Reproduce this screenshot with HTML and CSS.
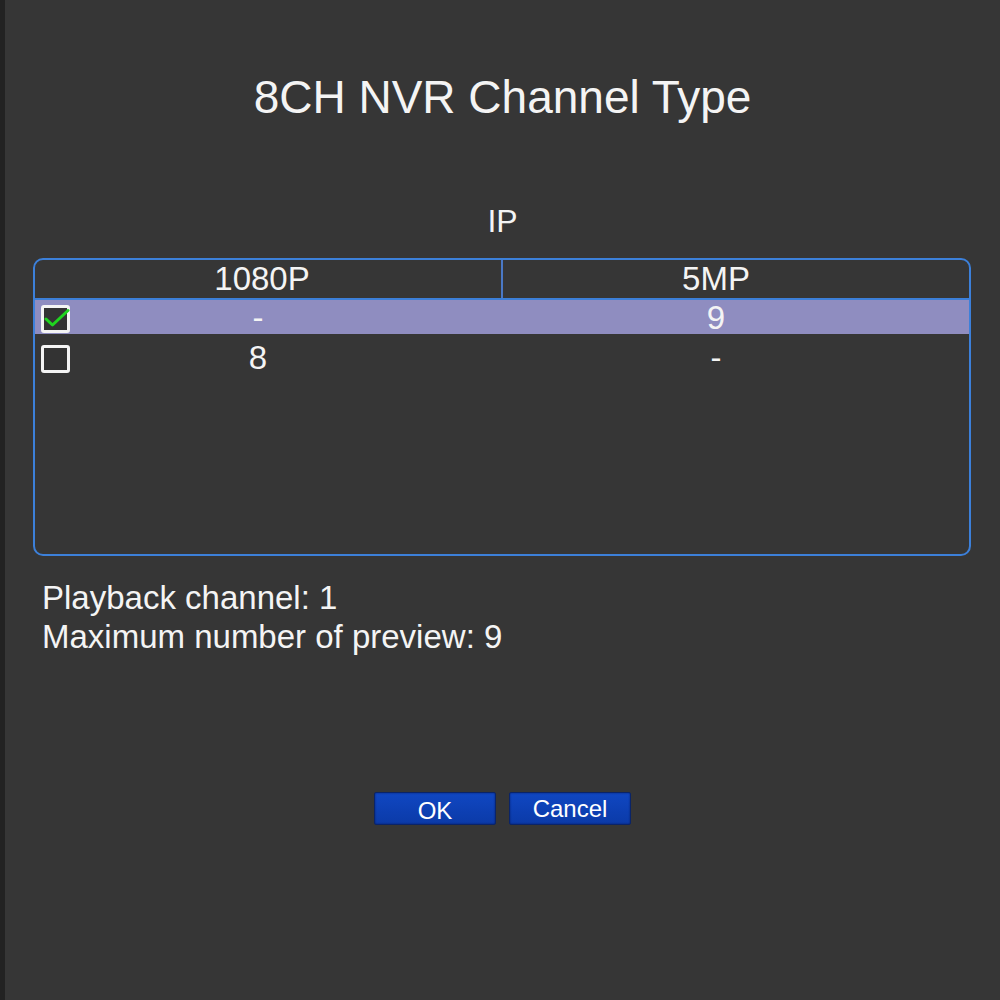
FILE: index.html
```html
<!DOCTYPE html>
<html>
<head>
<meta charset="utf-8">
<link rel="stylesheet" href="styles.css">
</head>
<body>
<div class="screen">
  <h1 class="title">8CH NVR Channel Type</h1>
  <div class="section">IP</div>
  <div class="table">
    <div class="thead">
      <div class="th th1">1080P</div>
      <div class="th th2">5MP</div>
    </div>
    <div class="row selected">
      <div class="cbcell"><span class="check"><svg width="28" height="24" viewBox="0 0 28 24"><path d="M2 11 L8.5 17 L24 2.5" fill="none" stroke="#1fd51f" stroke-width="3" stroke-linecap="round" stroke-linejoin="round"/></svg></span></div>
      <div class="td td1">-</div>
      <div class="td td2">9</div>
    </div>
    <div class="row">
      <div class="cbcell"><span class="check"></span></div>
      <div class="td td1">8</div>
      <div class="td td2">-</div>
    </div>
  </div>
  <div class="info">
    <p>Playback channel: 1</p>
    <p>Maximum number of preview: 9</p>
  </div>
  <div class="buttons">
    <button class="btn btn-ok">OK</button>
    <button class="btn btn-cancel">Cancel</button>
  </div>
</div>
</body>
</html>
```
FILE: styles.css
```css
html, body {
  margin: 0;
  padding: 0;
  background: #363636;
}
body {
  font-family: "Liberation Sans", Arial, sans-serif;
  color: #f4f4f4;
}
.screen {
  min-height: 1000px;
  box-sizing: border-box;
  border-left: 5px solid #222222;
  padding-top: 74px;
}
.title {
  margin: 0;
  font-size: 46px;
  line-height: 46px;
  font-weight: normal;
  text-align: center;
}
.section {
  margin-top: 85px;
  font-size: 32px;
  line-height: 32px;
  text-align: center;
}
.table {
  margin: 21px 29px 0 28px;
  height: 298px;
  box-sizing: border-box;
  border: 2px solid #3c80da;
  border-radius: 10px;
}
.thead {
  display: grid;
  grid-template-columns: 466px 468px;
  height: 38px;
  border-bottom: 2px solid #3c7fd8;
}
.th {
  font-size: 33px;
  line-height: 38px;
  text-align: center;
}
.th1 {
  padding-right: 12px;
}
.th2 {
  border-left: 2px solid #4a78c6;
  padding-right: 40px;
}
.row {
  display: grid;
  grid-template-columns: 40px 366px 1fr;
  height: 34px;
  margin-bottom: 6px;
}
.row.selected {
  background: #8f8dc0;
}
.cbcell {
  display: flex;
  align-items: flex-start;
  padding-left: 6px;
  padding-top: 5px;
}
.check {
  display: block;
  width: 23px;
  height: 22px;
  border: 3px solid #f4f4f4;
  border-radius: 3px;
  background: #333333;
  position: relative;
}
.check svg {
  position: absolute;
  left: 0;
  top: 0;
}
.td {
  font-size: 33px;
  line-height: 34px;
  text-align: center;
  padding-top: 1px;
}
.td2 {
  padding-left: 22px;
}
.info {
  margin-top: 22px;
  padding-left: 37px;
  font-size: 33px;
  line-height: 39px;
}
.info p {
  margin: 0;
}
.buttons {
  margin-top: 136px;
  display: flex;
  justify-content: center;
  gap: 13px;
}
.btn {
  width: 122px;
  height: 33px;
  box-sizing: border-box;
  border: 1px solid #0a2468;
  border-radius: 2px;
  background: linear-gradient(#1047c2, #0b3aa8);
  box-shadow: inset 0 0 2px rgba(0, 10, 60, 0.6);
  color: #ffffff;
  font-family: "Liberation Sans", Arial, sans-serif;
  font-size: 24px;
  padding: 0;
}
.btn-ok {
  line-height: 36px;
}
.btn-cancel {
  line-height: 28px;
}
```
